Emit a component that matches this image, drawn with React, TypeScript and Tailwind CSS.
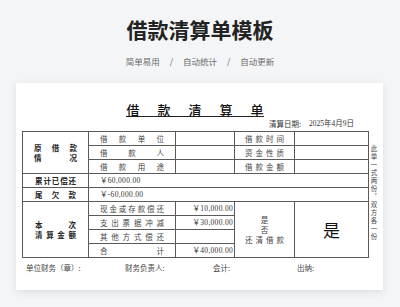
const cjk = { fontFamily: '"Noto Sans CJK SC", "Noto Sans", sans-serif' };
const num = { fontFamily: '"Liberation Serif", "Noto Sans CJK SC", serif' };

function Spread({ chars, className = '' }: { chars: string[]; className?: string }) {
  return (
    <div className={`flex justify-between ${className}`}>
      {chars.map((c, i) => (
        <span key={i}>{c}</span>
      ))}
    </div>
  );
}

const cell = 'border border-[#5a5a5a] p-0 align-middle';

export default function App() {
  return (
    <div className="min-h-[307px] w-[400px] bg-[#f4f5f7] pt-[19px]" style={cjk}>
      <h1 className="text-center text-[21px] leading-[21px] font-bold text-[#222]">借款清算单模板</h1>
      <div className="mt-[17px] flex items-center justify-center text-[8.5px] leading-[9px] text-[#6b6b6b]">
        <span>简单易用</span>
        <span className="mx-[10px]">/</span>
        <span>自动统计</span>
        <span className="mx-[10px]">/</span>
        <span>自动更新</span>
      </div>

      <div className="mx-[16px] mt-[17px] h-[207px] w-[367px] bg-white pl-[6px] pt-[20px] shadow-[0_2px_8px_rgba(0,0,0,0.10)]">
        <div className="flex">
          <div className="w-[346px]">
            {/* document title */}
            <div className="flex justify-center">
              <div className="flex gap-[18px] border-b border-[#222] text-[13px] leading-[13px] font-medium text-[#111]">
                <span>借</span>
                <span>款</span>
                <span>清</span>
                <span>算</span>
                <span>单</span>
              </div>
            </div>

            <div className="mt-[3px] flex justify-end pr-[14px] text-[7.5px] leading-[8px] text-[#333]">
              <span>清算日期:</span>
              <span className="ml-[8px]" style={num}>2025年4月9日</span>
            </div>

            <table className="mt-[3px] w-[346px] table-fixed border-collapse border border-[#444] text-[7.5px] leading-[8px] text-[#444]">
              <colgroup>
                <col className="w-[66px]" />
                <col className="w-[87px]" />
                <col className="w-[59px]" />
                <col className="w-[60px]" />
                <col className="w-[74px]" />
              </colgroup>
              <tbody>
                <tr className="h-[14px]">
                  <td rowSpan={3} className={`${cell} px-[11px] leading-[10px] font-bold text-[#222]`}>
                    <Spread chars={['原', '借', '款']} />
                    <Spread chars={['情', '况']} />
                  </td>
                  <td className={`${cell} px-[11px]`}>
                    <Spread chars={['借', '款', '单', '位']} />
                  </td>
                  <td className={cell}></td>
                  <td className={`${cell} px-[10px]`}>
                    <Spread chars={['借', '款', '时', '间']} />
                  </td>
                  <td className={cell}></td>
                </tr>
                <tr className="h-[14px]">
                  <td className={`${cell} px-[11px]`}>
                    <Spread chars={['借', '款', '人']} />
                  </td>
                  <td className={cell}></td>
                  <td className={`${cell} px-[10px]`}>
                    <Spread chars={['资', '金', '性', '质']} />
                  </td>
                  <td className={cell}></td>
                </tr>
                <tr className="h-[14px]">
                  <td className={`${cell} px-[11px]`}>
                    <Spread chars={['借', '款', '用', '途']} />
                  </td>
                  <td className={cell}></td>
                  <td className={`${cell} px-[10px]`}>
                    <Spread chars={['借', '款', '金', '额']} />
                  </td>
                  <td className={cell}></td>
                </tr>
                <tr className="h-[14px]">
                  <td className={`${cell} px-[12px] font-bold text-[#222]`}>
                    <Spread chars={['累', '计', '已', '偿', '还']} />
                  </td>
                  <td colSpan={4} className={`${cell} px-[11px] tracking-[0.3px] text-[#333]`} style={num}>
                    ￥60,000.00
                  </td>
                </tr>
                <tr className="h-[14px]">
                  <td className={`${cell} px-[12px] font-bold text-[#222]`}>
                    <Spread chars={['尾', '欠', '款']} />
                  </td>
                  <td colSpan={4} className={`${cell} px-[11px] tracking-[0.3px] text-[#333]`} style={num}>
                    ￥-60,000.00
                  </td>
                </tr>
                <tr className="h-[14px]">
                  <td rowSpan={4} className={`${cell} px-[12px] leading-[10px] font-bold text-[#222]`}>
                    <Spread chars={['本', '次']} />
                    <Spread chars={['清', '算', '金', '额']} />
                  </td>
                  <td className={`${cell} px-[11px]`}>
                    <Spread chars={['现', '金', '或', '存', '款', '偿', '还']} />
                  </td>
                  <td className={`${cell} pr-[1px] text-right tracking-[0.3px] text-[#333]`} style={num}>
                    ￥10,000.00
                  </td>
                  <td rowSpan={4} className={`${cell} px-[10px] text-center leading-[10px]`}>
                    <div>是</div>
                    <div>否</div>
                    <Spread chars={['还', '清', '借', '款']} />
                  </td>
                  <td rowSpan={4} className={`${cell} text-center text-[17px] leading-[17px] text-[#111]`}>
                    是
                  </td>
                </tr>
                <tr className="h-[14px]">
                  <td className={`${cell} px-[11px]`}>
                    <Spread chars={['支', '出', '票', '据', '冲', '减']} />
                  </td>
                  <td className={`${cell} pr-[1px] text-right tracking-[0.3px] text-[#333]`} style={num}>
                    ￥30,000.00
                  </td>
                </tr>
                <tr className="h-[14px]">
                  <td className={`${cell} px-[11px]`}>
                    <Spread chars={['其', '他', '方', '式', '偿', '还']} />
                  </td>
                  <td className={cell}></td>
                </tr>
                <tr className="h-[14px]">
                  <td className={`${cell} px-[11px]`}>
                    <Spread chars={['合', '计']} />
                  </td>
                  <td className={`${cell} pr-[1px] text-right tracking-[0.3px] text-[#333]`} style={num}>
                    ￥40,000.00
                  </td>
                </tr>
              </tbody>
            </table>

            <div className="mt-[6px] flex pl-[4px] text-[7.5px] leading-[8px] text-[#444]">
              <span className="w-[99px]">单位财务（章）:</span>
              <span className="w-[88px]">财务负责人:</span>
              <span className="w-[84px]">会计:</span>
              <span>出纳:</span>
            </div>
          </div>

          {/* side note */}
          <div className="flex w-[12px] justify-center pt-[42px]">
            <div className="text-[6.5px] leading-[8px] tracking-[1.5px] text-[#444] [writing-mode:vertical-rl]">
              此单一式两份，双方各一份
            </div>
          </div>
        </div>
      </div>
    </div>
  );
}
